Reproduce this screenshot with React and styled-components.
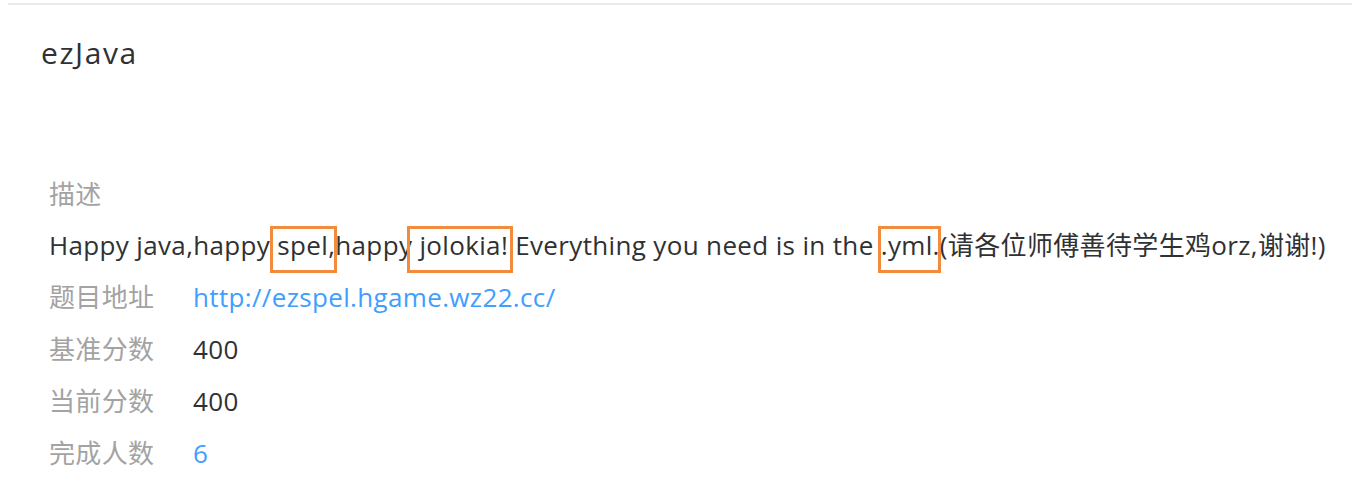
import React from "react";
import styled, { createGlobalStyle } from "styled-components";

const GlobalStyle = createGlobalStyle`
  html, body { margin: 0; background: #ffffff; }
  body {
    font-family: "Open Sans", "Noto Sans CJK SC", sans-serif;
    color: #303133;
  }
`;

const Page = styled.div`
  padding: 3px 1px 0 8px;
`;

const Card = styled.section`
  border-top: 2px solid #e8ebef;
`;

const Title = styled.h1`
  margin: 22px 0 0 33px;
  font-size: 30px;
  font-weight: 400;
  letter-spacing: 1.6px;
  line-height: 52px;
  color: #303133;
`;

const Info = styled.div`
  margin-top: 89px;
  padding-left: 41px;
  font-size: 26px;
  letter-spacing: 0.35px;
`;

const Label = styled.div`
  height: 52px;
  line-height: 52px;
  color: #a3a3a3;
  white-space: nowrap;
`;

const Description = styled.p`
  margin: 0;
  height: 51px;
  line-height: 51px;
  white-space: nowrap;
  color: #303133;
`;

const Mark = styled.span`
  position: relative;
  display: inline-block;
  &::after {
    content: "";
    position: absolute;
    top: 6px;
    bottom: -2px;
    left: ${(p) => p.$l}px;
    right: ${(p) => p.$r}px;
    border: 3px solid #f48a3c;
    pointer-events: none;
  }
`;

const Row = styled.div`
  display: grid;
  grid-template-columns: 144px 1fr;
  height: 52px;
  line-height: 52px;
  white-space: nowrap;
`;

const Value = styled.span`
  color: ${(p) => (p.$accent ? "#409eff" : "#303133")};
`;

const Link = styled.a`
  color: #409eff;
  text-decoration: none;
`;

export default function App() {
  return (
    <Page>
      <GlobalStyle />
      <Card>
        <Title>ezJava</Title>
        <Info>
          <Label>描述</Label>
          <Description>
            Happy java,happy <Mark $l={-7} $r={-2}>spel,</Mark>happy{" "}
            <Mark $l={-12} $r={-5}>jolokia!</Mark> Everything you need is in the{" "}
            <Mark $l={-3} $r={-1}>.yml.</Mark>(请各位师傅善待学生鸡orz,谢谢!)
          </Description>
          <Row>
            <Label>题目地址</Label>
            <Link href="#">http://ezspel.hgame.wz22.cc/</Link>
          </Row>
          <Row>
            <Label>基准分数</Label>
            <Value>400</Value>
          </Row>
          <Row>
            <Label>当前分数</Label>
            <Value>400</Value>
          </Row>
          <Row>
            <Label>完成人数</Label>
            <Value $accent>6</Value>
          </Row>
        </Info>
      </Card>
    </Page>
  );
}
